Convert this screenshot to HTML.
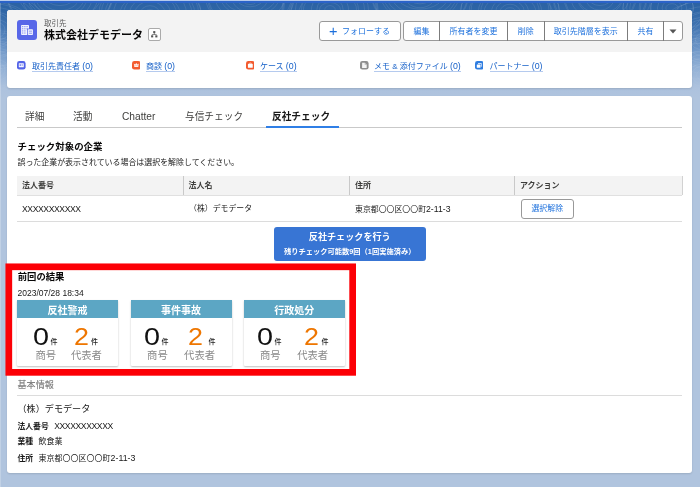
<!DOCTYPE html>
<html lang="ja">
<head>
<meta charset="utf-8">
<title>取引先 - 株式会社デモデータ</title>
<style>
*{box-sizing:border-box;margin:0;padding:0}
html,body{width:700px;height:487px;overflow:hidden}
body{font-family:"Liberation Sans","Noto Sans CJK JP",sans-serif;color:#181818;position:relative;
background:linear-gradient(180deg,#2b61a1 0px,#2e65a6 10px,#4577b3 28px,#6c95c7 48px,#93b1d6 68px,#adc2de 88px,#b0c4de 98px,#b0c4de 487px);}
.topline{position:absolute;left:0;top:0;width:700px;height:1px;background:#b5caec}
.topline2{position:absolute;left:0;top:1px;width:700px;height:2px;background:#2b63c9}
#root{position:absolute;left:0;top:0;width:700px;height:487px;will-change:transform;overflow:hidden}
.abs{position:absolute;white-space:nowrap}
.card{position:absolute;background:#fff;border-radius:3px;box-shadow:0 1px 2px rgba(0,0,0,.12)}
#hdr{left:7px;top:10px;width:685px;height:78px;overflow:hidden}
#hdr .top{position:absolute;left:0;top:0;width:100%;height:42px;background:#f3f3f3}
.btn{position:absolute;top:21px;height:20px;border:1px solid #999;background:#fff;color:#1b6fdc;font-size:8px;line-height:20px;text-align:center;white-space:nowrap}
.lnk{position:absolute;top:62px;font-size:8px;line-height:8px;color:#1660c8;text-decoration:none;border-bottom:1px solid #b5caee;white-space:nowrap}
.ric{position:absolute;top:61.1px;display:block}
#main{left:7px;top:96px;width:685px;height:376.5px}
.tab{position:absolute;top:110px;font-size:9.7px;line-height:14px;color:#3e3e3c;white-space:nowrap}
.th{position:absolute;top:175.5px;height:20px;line-height:20px;font-size:8px;font-weight:700;color:#3e3e3c;white-space:nowrap}
.td{position:absolute;top:202px;line-height:14px;font-size:7.9px;color:#181818;white-space:nowrap}
.mc{position:absolute;top:300px;width:101px;height:66px;background:#fff;box-shadow:0 1px 2px rgba(0,0,0,.25);border-radius:1px}
.mc .h{position:absolute;left:0;top:0;width:100%;height:17.5px;background:#5ca6c4;color:#fff;font-weight:700;font-size:10px;line-height:17.5px;padding-top:2px;overflow:hidden;text-align:center}
.mc .n{position:absolute;top:22px;font-size:24px;line-height:30px;color:#111;transform:scaleX(1.2);transform-origin:0 0}
.mc .o{color:#ee7600;transform:scaleX(1.12)}
.mc .k{position:absolute;top:37px;font-size:7px;line-height:10px;color:#222;font-weight:500}
.mc .l{position:absolute;top:49px;font-size:10.3px;line-height:14px;color:#8a8a8a}
.bi{position:absolute;left:17.5px;font-size:8px;line-height:12px;white-space:nowrap}
.lt{font-size:110%}
.xx{font-size:8.6px;letter-spacing:-.4px}
.bi b{font-weight:700;margin-right:5.5px;font-size:7.8px}
</style>
</head>
<body>
<div id="root">
<div class="abs" style="left:0;top:3px;width:1px;height:484px;background:rgba(255,255,255,.22)"></div>
<svg class="abs" style="left:0;top:3px;display:block" width="700" height="100" viewBox="0 3 700 100"><defs><linearGradient id="fd" x1="0" y1="0" x2="0" y2="1"><stop offset="0" stop-color="#fff" stop-opacity="1"/><stop offset=".55" stop-color="#fff" stop-opacity=".7"/><stop offset="1" stop-color="#fff" stop-opacity="0"/></linearGradient><mask id="mk"><rect x="0" y="3" width="700" height="100" fill="url(#fd)"/></mask></defs><g mask="url(#mk)" fill="none" stroke="#fff" stroke-opacity=".11" stroke-width=".9"><ellipse cx="-5" cy="30" rx="5.4" ry="4.5"/><ellipse cx="-5" cy="30" rx="10.0" ry="8.3"/><ellipse cx="-5" cy="30" rx="15.4" ry="10.6"/><ellipse cx="-5" cy="30" rx="17.1" ry="16.4"/><ellipse cx="-5" cy="30" rx="22.6" ry="17.8"/><ellipse cx="-5" cy="30" rx="32.5" ry="22.4"/><ellipse cx="-5" cy="30" rx="36.3" ry="26.0"/><ellipse cx="-5" cy="30" rx="39.3" ry="27.4"/><ellipse cx="-5" cy="30" rx="44.0" ry="36.0"/><ellipse cx="-5" cy="30" rx="47.4" ry="38.9"/><ellipse cx="-5" cy="30" rx="54.1" ry="36.6"/><ellipse cx="60" cy="-6" rx="6.1" ry="4.6"/><ellipse cx="60" cy="-6" rx="9.8" ry="7.3"/><ellipse cx="60" cy="-6" rx="16.4" ry="11.6"/><ellipse cx="60" cy="-6" rx="20.7" ry="16.6"/><ellipse cx="60" cy="-6" rx="25.5" ry="20.7"/><ellipse cx="60" cy="-6" rx="28.0" ry="24.0"/><ellipse cx="60" cy="-6" rx="32.9" ry="28.6"/><ellipse cx="60" cy="-6" rx="41.7" ry="27.0"/><ellipse cx="60" cy="-6" rx="38.5" ry="31.2"/><ellipse cx="60" cy="-6" rx="52.9" ry="36.4"/><ellipse cx="60" cy="-6" rx="53.5" ry="38.7"/><ellipse cx="150" cy="14" rx="5.8" ry="4.4"/><ellipse cx="150" cy="14" rx="9.9" ry="8.3"/><ellipse cx="150" cy="14" rx="15.3" ry="12.8"/><ellipse cx="150" cy="14" rx="20.5" ry="16.8"/><ellipse cx="150" cy="14" rx="26.4" ry="21.0"/><ellipse cx="150" cy="14" rx="30.0" ry="20.8"/><ellipse cx="150" cy="14" rx="36.5" ry="28.8"/><ellipse cx="150" cy="14" rx="42.0" ry="30.2"/><ellipse cx="150" cy="14" rx="44.9" ry="31.2"/><ellipse cx="150" cy="14" rx="51.2" ry="37.5"/><ellipse cx="150" cy="14" rx="48.8" ry="36.6"/><ellipse cx="250" cy="-4" rx="6.3" ry="5.0"/><ellipse cx="250" cy="-4" rx="9.2" ry="8.6"/><ellipse cx="250" cy="-4" rx="14.6" ry="10.8"/><ellipse cx="250" cy="-4" rx="18.5" ry="16.2"/><ellipse cx="250" cy="-4" rx="26.5" ry="17.0"/><ellipse cx="250" cy="-4" rx="29.6" ry="20.2"/><ellipse cx="250" cy="-4" rx="35.3" ry="25.1"/><ellipse cx="250" cy="-4" rx="41.7" ry="32.9"/><ellipse cx="250" cy="-4" rx="42.6" ry="37.0"/><ellipse cx="250" cy="-4" rx="44.8" ry="33.4"/><ellipse cx="250" cy="-4" rx="53.1" ry="36.3"/><ellipse cx="330" cy="10" rx="5.3" ry="4.4"/><ellipse cx="330" cy="10" rx="10.6" ry="7.5"/><ellipse cx="330" cy="10" rx="13.2" ry="12.7"/><ellipse cx="330" cy="10" rx="18.6" ry="16.9"/><ellipse cx="330" cy="10" rx="26.6" ry="18.4"/><ellipse cx="330" cy="10" rx="28.5" ry="22.6"/><ellipse cx="330" cy="10" rx="34.6" ry="26.7"/><ellipse cx="330" cy="10" rx="38.5" ry="30.5"/><ellipse cx="330" cy="10" rx="47.4" ry="33.4"/><ellipse cx="330" cy="10" rx="46.3" ry="38.7"/><ellipse cx="330" cy="10" rx="48.2" ry="38.7"/><ellipse cx="420" cy="-8" rx="6.5" ry="4.5"/><ellipse cx="420" cy="-8" rx="10.5" ry="7.2"/><ellipse cx="420" cy="-8" rx="14.6" ry="11.9"/><ellipse cx="420" cy="-8" rx="17.1" ry="15.7"/><ellipse cx="420" cy="-8" rx="25.0" ry="17.1"/><ellipse cx="420" cy="-8" rx="29.7" ry="22.3"/><ellipse cx="420" cy="-8" rx="34.9" ry="25.2"/><ellipse cx="420" cy="-8" rx="40.0" ry="31.3"/><ellipse cx="420" cy="-8" rx="37.2" ry="30.0"/><ellipse cx="420" cy="-8" rx="49.3" ry="40.7"/><ellipse cx="420" cy="-8" rx="48.4" ry="40.1"/><ellipse cx="510" cy="12" rx="5.9" ry="4.3"/><ellipse cx="510" cy="12" rx="10.0" ry="7.8"/><ellipse cx="510" cy="12" rx="14.4" ry="11.9"/><ellipse cx="510" cy="12" rx="18.5" ry="14.9"/><ellipse cx="510" cy="12" rx="25.9" ry="16.9"/><ellipse cx="510" cy="12" rx="29.3" ry="23.7"/><ellipse cx="510" cy="12" rx="31.7" ry="24.5"/><ellipse cx="510" cy="12" rx="41.0" ry="28.0"/><ellipse cx="510" cy="12" rx="39.1" ry="32.8"/><ellipse cx="510" cy="12" rx="49.6" ry="33.6"/><ellipse cx="510" cy="12" rx="49.3" ry="39.0"/><ellipse cx="600" cy="-2" rx="6.3" ry="4.4"/><ellipse cx="600" cy="-2" rx="11.3" ry="7.5"/><ellipse cx="600" cy="-2" rx="14.3" ry="12.1"/><ellipse cx="600" cy="-2" rx="21.5" ry="15.1"/><ellipse cx="600" cy="-2" rx="22.4" ry="17.3"/><ellipse cx="600" cy="-2" rx="29.0" ry="21.0"/><ellipse cx="600" cy="-2" rx="36.0" ry="28.1"/><ellipse cx="600" cy="-2" rx="34.8" ry="28.2"/><ellipse cx="600" cy="-2" rx="46.0" ry="34.4"/><ellipse cx="600" cy="-2" rx="50.9" ry="35.6"/><ellipse cx="600" cy="-2" rx="46.8" ry="38.6"/><ellipse cx="672" cy="8" rx="6.2" ry="4.3"/><ellipse cx="672" cy="8" rx="9.9" ry="8.0"/><ellipse cx="672" cy="8" rx="14.6" ry="11.5"/><ellipse cx="672" cy="8" rx="21.7" ry="14.1"/><ellipse cx="672" cy="8" rx="21.0" ry="20.8"/><ellipse cx="672" cy="8" rx="31.6" ry="24.9"/><ellipse cx="672" cy="8" rx="32.8" ry="28.7"/><ellipse cx="672" cy="8" rx="42.2" ry="27.9"/><ellipse cx="672" cy="8" rx="45.3" ry="35.8"/><ellipse cx="672" cy="8" rx="49.2" ry="37.1"/><ellipse cx="672" cy="8" rx="48.9" ry="39.1"/><ellipse cx="706" cy="40" rx="5.3" ry="4.1"/><ellipse cx="706" cy="40" rx="10.6" ry="7.7"/><ellipse cx="706" cy="40" rx="16.2" ry="10.5"/><ellipse cx="706" cy="40" rx="21.6" ry="16.0"/><ellipse cx="706" cy="40" rx="26.8" ry="20.6"/><ellipse cx="706" cy="40" rx="31.7" ry="22.9"/><ellipse cx="706" cy="40" rx="29.1" ry="27.5"/><ellipse cx="706" cy="40" rx="34.7" ry="28.4"/><ellipse cx="706" cy="40" rx="44.4" ry="33.5"/><ellipse cx="706" cy="40" rx="46.1" ry="40.5"/><ellipse cx="706" cy="40" rx="53.3" ry="39.1"/><ellipse cx="702" cy="75" rx="5.4" ry="4.9"/><ellipse cx="702" cy="75" rx="10.3" ry="8.6"/><ellipse cx="702" cy="75" rx="14.4" ry="10.9"/><ellipse cx="702" cy="75" rx="19.7" ry="16.4"/><ellipse cx="702" cy="75" rx="22.1" ry="20.1"/><ellipse cx="702" cy="75" rx="31.9" ry="24.0"/><ellipse cx="702" cy="75" rx="36.2" ry="23.2"/><ellipse cx="702" cy="75" rx="39.2" ry="32.1"/><ellipse cx="702" cy="75" rx="37.6" ry="31.6"/><ellipse cx="702" cy="75" rx="44.3" ry="37.1"/><ellipse cx="702" cy="75" rx="50.7" ry="40.3"/><ellipse cx="-4" cy="70" rx="6.2" ry="4.0"/><ellipse cx="-4" cy="70" rx="9.1" ry="7.4"/><ellipse cx="-4" cy="70" rx="13.5" ry="10.6"/><ellipse cx="-4" cy="70" rx="22.0" ry="16.5"/><ellipse cx="-4" cy="70" rx="21.5" ry="18.9"/><ellipse cx="-4" cy="70" rx="27.4" ry="21.6"/><ellipse cx="-4" cy="70" rx="32.1" ry="27.0"/><ellipse cx="-4" cy="70" rx="38.8" ry="28.8"/><ellipse cx="-4" cy="70" rx="39.1" ry="32.0"/><ellipse cx="-4" cy="70" rx="42.5" ry="37.4"/><ellipse cx="-4" cy="70" rx="54.7" ry="39.4"/></g></svg>
<div class="topline"></div><div class="topline2"></div>

<div class="card" id="hdr">
  <div class="top"></div>
</div>
<!-- icon -->
<div class="abs" style="left:17px;top:20px;width:20px;height:20px;border-radius:3px;background:#5867e8">
<svg width="20" height="20" viewBox="0 0 20 20" style="display:block"><rect x="4.1" y="4.9" width="7.9" height="10" rx=".7" fill="#fff" opacity=".93"/><rect x="10.2" y="8.6" width="6.4" height="7" fill="#5867e8"/><rect x="10.9" y="9.3" width="5" height="5.6" rx=".6" fill="#fff" opacity=".93"/><g fill="#5867e8" opacity=".6"><rect x="5.0" y="6.0" width="1.35" height="1.2"/><rect x="7.2" y="6.0" width="1.35" height="1.2"/><rect x="9.4" y="6.0" width="1.35" height="1.2"/><rect x="5.0" y="8.15" width="1.35" height="1.2"/><rect x="7.2" y="8.15" width="1.35" height="1.2"/><rect x="9.4" y="8.15" width="1.35" height="1.2"/><rect x="5.0" y="10.3" width="1.35" height="1.2"/><rect x="7.2" y="10.3" width="1.35" height="1.2"/><rect x="5.0" y="12.45" width="1.35" height="1.2"/><rect x="7.2" y="12.45" width="1.35" height="1.2"/><rect x="11.8" y="10.6" width="3.2" height="1.1"/><rect x="11.8" y="12.7" width="3.2" height="1.1"/></g></svg>
</div>
<div class="abs" style="left:44px;top:18.5px;font-size:7.5px;line-height:10px;color:#5c5c5c">取引先</div>
<div class="abs" style="left:44px;top:26.5px;font-size:11px;line-height:16px;font-weight:700;color:#080707">株式会社デモデータ</div>
<div class="abs" style="left:148.3px;top:28px;width:12.5px;height:12.5px;border:1px solid #aaa;border-radius:2px;background:#fff">
<svg width="10.5" height="10.5" viewBox="0 0 10 10" style="display:block"><g fill="#555"><rect x="4" y="2" width="2" height="2"/><rect x="2" y="6" width="2" height="2"/><rect x="6" y="6" width="2" height="2"/><rect x="4.7" y="4" width=".6" height="1.3"/><rect x="2.7" y="5" width="4.6" height=".6"/></g></svg>
</div>

<div class="btn" style="left:318.5px;width:82px;border-radius:3px"><span style="font-size:14.5px;margin-right:4.5px;vertical-align:-1.5px;line-height:10px">+</span>フォローする</div>
<div class="btn" style="left:403px;width:37px;border-radius:3px 0 0 3px">編集</div>
<div class="btn" style="left:439px;width:69px">所有者を変更</div>
<div class="btn" style="left:507px;width:37.5px">削除</div>
<div class="btn" style="left:543.5px;width:84.5px">取引先階層を表示</div>
<div class="btn" style="left:627px;width:37px">共有</div>
<div class="btn" style="left:663px;width:19.5px;border-radius:0 3px 3px 0"><svg width="8" height="6" viewBox="0 0 8 6" style="position:absolute;left:4.5px;top:7px"><path d="M0.5 0.5h7L4 4.5z" fill="#555"/></svg></div>

<div class="abs" style="left:439px;top:21px;width:1px;height:20px;background:#7c7c7c"></div><div class="abs" style="left:507px;top:21px;width:1px;height:20px;background:#7c7c7c"></div><div class="abs" style="left:543.5px;top:21px;width:1px;height:20px;background:#7c7c7c"></div><div class="abs" style="left:627px;top:21px;width:1px;height:20px;background:#7c7c7c"></div><div class="abs" style="left:663px;top:21px;width:1px;height:20px;background:#7c7c7c"></div>
<svg class="ric" style="left:17.3px" width="8.6" height="8.6" viewBox="0 0 17.2 17.2"><rect width="17.2" height="17.2" rx="4.8" fill="#5464e8"/><rect x="3.6" y="4.6" width="10" height="7.8" rx="1" fill="#fff" opacity=".95"/><rect x="5.3" y="6.4" width="2.4" height="3.6" fill="#5464e8" opacity=".8"/><rect x="9" y="6.6" width="3" height="1.1" fill="#5464e8" opacity=".7"/><rect x="9" y="8.8" width="3" height="1.1" fill="#5464e8" opacity=".7"/></svg>
<div class="lnk" style="left:32px">取引先責任者 <span class="lt">(0)</span></div>
<svg class="ric" style="left:131.5px" width="8.6" height="8.6" viewBox="0 0 17.2 17.2"><rect width="17.2" height="17.2" rx="4.8" fill="#f35a2e"/><path d="M3.6 5.2l2.6 2 2.4-3 2.4 3 2.6-2-1 6.8h-8z" fill="#fff" opacity=".9"/><rect x="4.8" y="9" width="7.6" height=".9" fill="#f35a2e" opacity=".45"/></svg>
<div class="lnk" style="left:146px">商談 <span class="lt">(0)</span></div>
<svg class="ric" style="left:245.7px" width="8.6" height="8.6" viewBox="0 0 17.2 17.2"><rect width="17.2" height="17.2" rx="4.8" fill="#f35a2e"/><rect x="3.9" y="5.6" width="9.6" height="8" rx="1.2" fill="#fff"/><rect x="6.9" y="3.8" width="3.6" height="2.4" rx=".8" fill="none" stroke="#fff" stroke-width="1.1" opacity=".8"/></svg>
<div class="lnk" style="left:260px">ケース <span class="lt">(0)</span></div>
<svg class="ric" style="left:360.2px" width="8.6" height="8.6" viewBox="0 0 17.2 17.2"><rect width="17.2" height="17.2" rx="4.8" fill="#8e8e8e"/><path d="M4.2 3.6h5.2l4 4v6.2h-9.2z" fill="#f4f4f4"/><path d="M9.4 3.6v4h4z" fill="#b8b8b8"/></svg>
<div class="lnk" style="left:374px">メモ &amp; 添付ファイル <span class="lt">(0)</span></div>
<svg class="ric" style="left:474.6px" width="8.6" height="8.6" viewBox="0 0 17.2 17.2"><rect width="17.2" height="17.2" rx="4.8" fill="#2f7de0"/><rect x="3.6" y="7" width="7.4" height="6.6" rx="1" fill="#fff"/><path d="M6 3.8h6.4a1.2 1.2 0 0 1 1.2 1.2v6.4h-1.8v-5.2h-5.8z" fill="#fff" opacity=".75"/></svg>
<div class="lnk" style="left:489.5px">パートナー <span class="lt">(0)</span></div>

<div class="card" id="main"></div>
<div class="tab" style="left:25px">詳細</div>
<div class="tab" style="left:73px">活動</div>
<div class="tab" style="left:122px;font-size:10.2px">Chatter</div>
<div class="tab" style="left:185px">与信チェック</div>
<div class="tab" style="left:272px;font-weight:700;color:#181818">反社チェック</div>
<div class="abs" style="left:17px;top:127px;width:665px;height:1px;background:#c9c9c9"></div>
<div class="abs" style="left:265.5px;top:125.5px;width:73px;height:2.5px;background:#2f7fe6"></div>

<div class="abs" style="left:17.5px;top:140px;font-size:9.45px;line-height:14px;font-weight:700;color:#080707">チェック対象の企業</div>
<div class="abs" style="left:17.5px;top:157px;font-size:7.95px;line-height:12px;color:#181818">誤った企業が表示されている場合は選択を解除してください。</div>

<div class="abs" style="left:17px;top:176px;width:665px;height:20px;background:#f3f3f3;border-bottom:1px solid #e0e0e0"></div>
<div class="abs" style="left:183px;top:176px;width:1px;height:19px;background:#c9c9c9"></div>
<div class="abs" style="left:348.6px;top:176px;width:1px;height:19px;background:#c9c9c9"></div>
<div class="abs" style="left:514.2px;top:176px;width:1px;height:19px;background:#c9c9c9"></div>
<div class="abs" style="left:681.5px;top:176px;width:1px;height:19px;background:#d2d2d2"></div>
<div class="th" style="left:22px">法人番号</div>
<div class="th" style="left:188.5px">法人名</div>
<div class="th" style="left:355px">住所</div>
<div class="th" style="left:520px">アクション</div>
<div class="td" style="left:22px"><span class="xx">XXXXXXXXXXX</span></div>
<div class="td" style="left:189px">（株）デモデータ</div>
<div class="td" style="left:355px">東京都〇〇区〇〇町<span class="lt">2-11-3</span></div>
<div class="abs" style="left:521px;top:199px;width:52.5px;height:19.5px;border:1px solid #999;border-radius:3px;background:#fff;color:#1b6fdc;font-size:7.9px;line-height:18px;text-align:center">選択解除</div>
<div class="abs" style="left:17px;top:221px;width:665px;height:1px;background:#dcdcdc"></div>

<div class="abs" style="left:273.5px;top:227px;width:152.5px;height:34px;background:#3875d4;border-radius:3px;color:#fff;text-align:center;font-weight:700">
<div style="font-size:9.1px;line-height:14px;margin-top:3px">反社チェックを行う</div>
<div style="font-size:7.25px;line-height:11px;margin-top:2px">残りチェック可能数9回（1回実施済み）</div>
</div>

<!-- red highlight -->
<svg class="abs" style="left:0;top:258px;display:block" width="365" height="124" viewBox="0 258 365 124"><rect x="8.81" y="266.81" width="343.84" height="105.54" fill="none" stroke="#fc0006" stroke-width="6.7"/></svg>

<div class="abs" style="left:17.7px;top:269.5px;font-size:9.35px;line-height:14px;font-weight:700;color:#080707">前回の結果</div>
<div class="abs" style="left:17.5px;top:287px;font-size:8.5px;line-height:12px;color:#181818">2023/07/28 18:34</div>

<div class="mc" style="left:17px"><div class="h">反社警戒</div>
<div class="n" style="left:16px">0</div><div class="k" style="left:33.5px">件</div><div class="n o" style="left:57px">2</div><div class="k" style="left:74px">件</div>
<div class="l" style="left:18.5px">商号</div><div class="l" style="left:54px">代表者</div></div>
<div class="mc" style="left:130.5px"><div class="h">事件事故</div>
<div class="n" style="left:13.6px">0</div><div class="k" style="left:31px">件</div><div class="n o" style="left:57.4px">2</div><div class="k" style="left:78px">件</div>
<div class="l" style="left:16.6px">商号</div><div class="l" style="left:53.6px">代表者</div></div>
<div class="mc" style="left:243.7px"><div class="h">行政処分</div>
<div class="n" style="left:13.4px">0</div><div class="k" style="left:30.8px">件</div><div class="n o" style="left:60.5px">2</div><div class="k" style="left:77.8px">件</div>
<div class="l" style="left:16.4px">商号</div><div class="l" style="left:53.6px">代表者</div></div>

<div class="abs" style="left:17.5px;top:379px;font-size:9.1px;line-height:12px;color:#828282;font-weight:500">基本情報</div>
<div class="abs" style="left:17px;top:395px;width:665px;height:1px;background:#dcdcdc"></div>
<div class="bi" style="top:402px;font-size:9.1px;line-height:14px">（株）デモデータ</div>
<div class="bi" style="top:420px"><b>法人番号</b><span class="xx">XXXXXXXXXXX</span></div>
<div class="bi" style="top:436px"><b>業種</b>飲食業</div>
<div class="bi" style="top:452px"><b>住所</b>東京都〇〇区〇〇町<span class="lt">2-11-3</span></div>
</div>
</body>
</html>
